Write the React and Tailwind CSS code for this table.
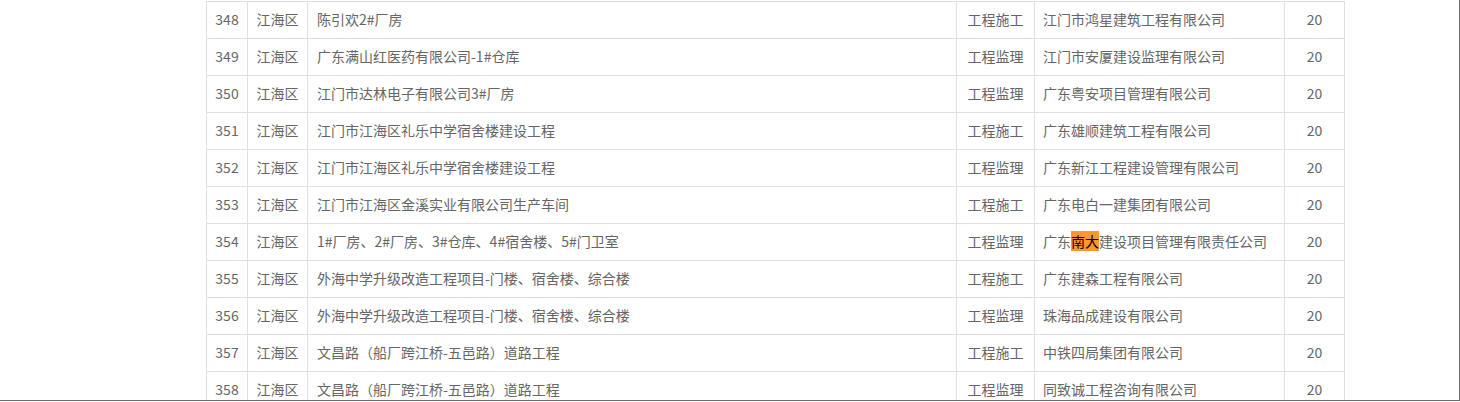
const rows = [
  ['348', '江海区', '陈引欢2#厂房', '工程施工', '江门市鸿星建筑工程有限公司', '20'],
  ['349', '江海区', '广东满山红医药有限公司-1#仓库', '工程监理', '江门市安厦建设监理有限公司', '20'],
  ['350', '江海区', '江门市达林电子有限公司3#厂房', '工程监理', '广东粤安项目管理有限公司', '20'],
  ['351', '江海区', '江门市江海区礼乐中学宿舍楼建设工程', '工程施工', '广东雄顺建筑工程有限公司', '20'],
  ['352', '江海区', '江门市江海区礼乐中学宿舍楼建设工程', '工程监理', '广东新江工程建设管理有限公司', '20'],
  ['353', '江海区', '江门市江海区金溪实业有限公司生产车间', '工程施工', '广东电白一建集团有限公司', '20'],
  ['354', '江海区', '1#厂房、2#厂房、3#仓库、4#宿舍楼、5#门卫室', '工程监理', 'HL', '20'],
  ['355', '江海区', '外海中学升级改造工程项目-门楼、宿舍楼、综合楼', '工程施工', '广东建森工程有限公司', '20'],
  ['356', '江海区', '外海中学升级改造工程项目-门楼、宿舍楼、综合楼', '工程监理', '珠海品成建设有限公司', '20'],
  ['357', '江海区', '文昌路（船厂跨江桥-五邑路）道路工程', '工程施工', '中铁四局集团有限公司', '20'],
  ['358', '江海区', '文昌路（船厂跨江桥-五邑路）道路工程', '工程监理', '同致诚工程咨询有限公司', '20'],
]

export default function App() {
  return (
    <div className="w-[1460px] h-[402px] bg-white">
      <div className="h-[401px] border-r border-b border-[#6b6b6b] overflow-hidden pt-px"
        style={{ fontFamily: '"Microsoft YaHei", "Noto Sans CJK SC", "Noto Sans", sans-serif' }}>
        <table className="ml-[206px] w-[1138px] table-fixed border-collapse text-[14px] text-[#666]">
          <colgroup>
            <col className="w-[41px]" />
            <col className="w-[60px]" />
            <col className="w-[649px]" />
            <col className="w-[78px]" />
            <col className="w-[250px]" />
            <col className="w-[60px]" />
          </colgroup>
          <tbody>
            {rows.map((r) => (
              <tr key={r[0]} className="h-[37px]">
                <td className="border border-[#e0e0e0] text-center pt-0 pb-[2px] px-0">{r[0]}</td>
                <td className="border border-[#e0e0e0] text-center pt-0 pb-[2px] px-0">{r[1]}</td>
                <td className="border border-[#e0e0e0] px-[9px] pt-0 pb-[2px] whitespace-nowrap">{r[2]}</td>
                <td className="border border-[#e0e0e0] text-center pt-0 pb-[2px] px-0 whitespace-nowrap">{r[3]}</td>
                <td className="border border-[#e0e0e0] px-[8px] pt-0 pb-[2px] whitespace-nowrap">
                  {r[4] === 'HL' ? (
                    <>广东<span className="bg-[#ff9632] text-black">南大</span>建设项目管理有限责任公司</>
                  ) : r[4]}
                </td>
                <td className="border border-[#e0e0e0] text-center pt-0 pb-[2px] px-0">{r[5]}</td>
              </tr>
            ))}
          </tbody>
        </table>
      </div>
    </div>
  )
}
